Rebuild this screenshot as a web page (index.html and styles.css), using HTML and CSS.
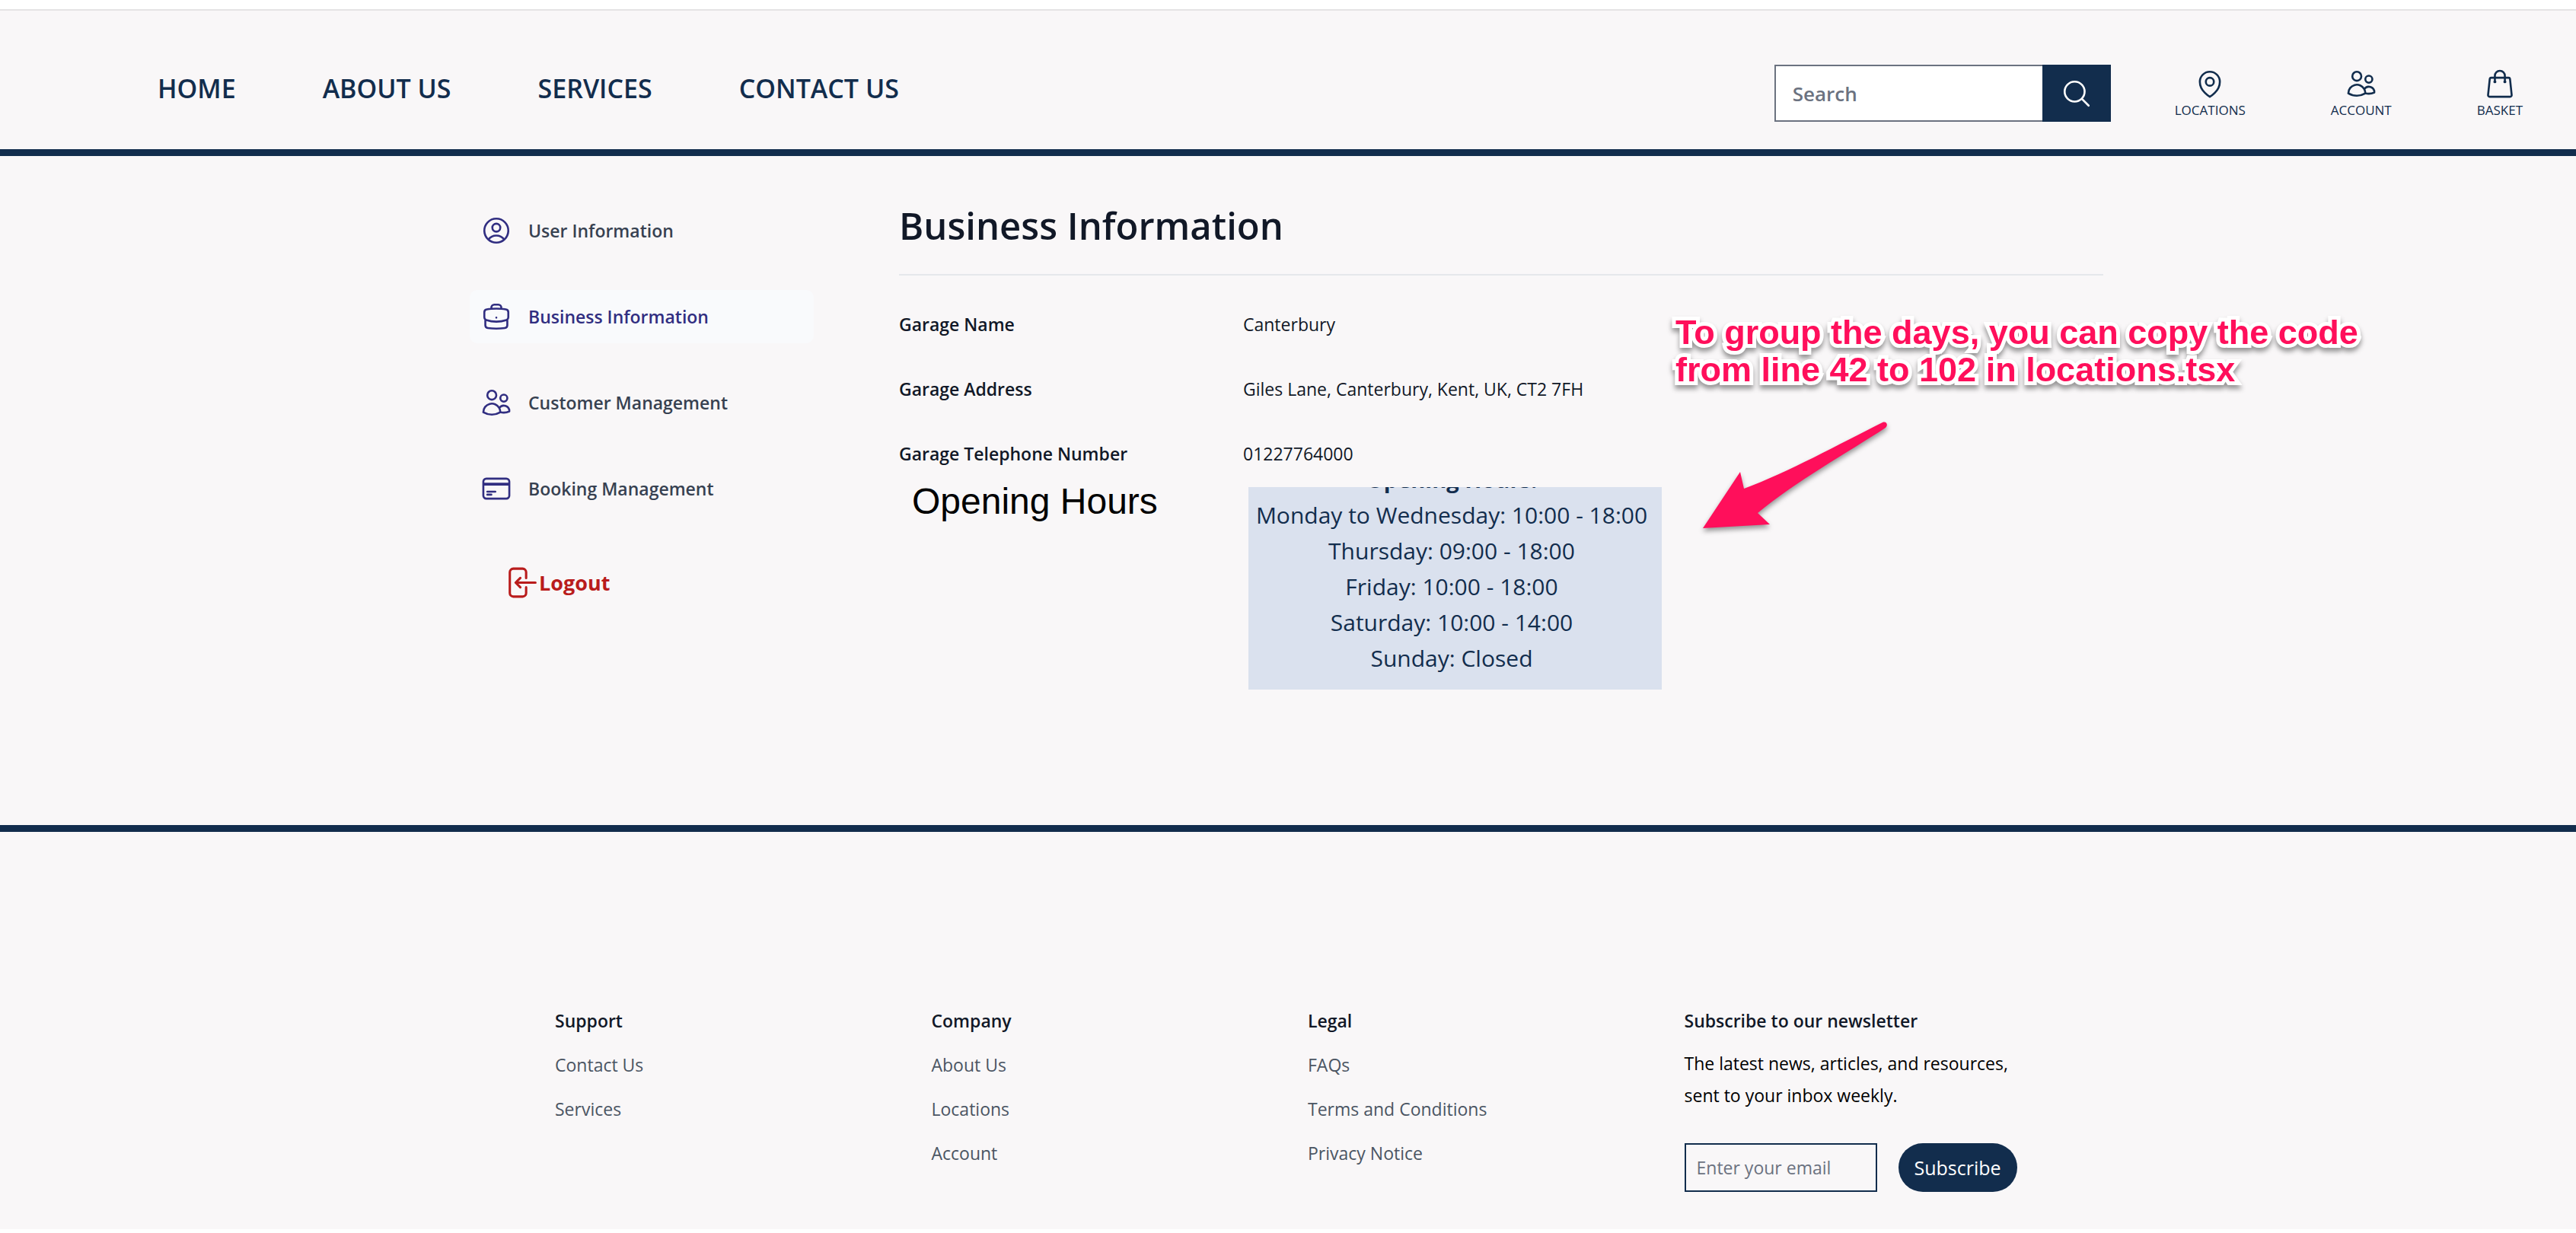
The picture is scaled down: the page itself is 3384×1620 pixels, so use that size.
FILE: index.html
```html
<!DOCTYPE html>
<html lang="en">
<head>
  <meta charset="utf-8">
  <meta name="viewport" content="width=device-width, initial-scale=1">
  <title>Business Information</title>
  <link rel="stylesheet" href="styles.css">
</head>
<body>
  <div class="page">
    <header class="header">
      <nav class="nav" aria-label="Main">
        <a href="#">HOME</a>
        <a href="#">ABOUT US</a>
        <a href="#">SERVICES</a>
        <a href="#">CONTACT US</a>
      </nav>
      <div class="header-tools">
        <form class="search">
          <input class="search-input" type="search" placeholder="Search" aria-label="Search">
          <button class="search-button" type="button" aria-label="Search">
            <svg class="icon" viewBox="0 0 24 24"><path d="M21 21l-5.197-5.197m0 0A7.5 7.5 0 105.196 5.196a7.5 7.5 0 0010.607 10.607z"/></svg>
          </button>
        </form>
        <div class="actions">
          <a class="action" href="#">
            <svg class="icon" viewBox="0 0 24 24"><path d="M15 10.5a3 3 0 11-6 0 3 3 0 016 0z"/><path d="M19.5 10.5c0 7.142-7.5 11.25-7.5 11.25S4.5 17.642 4.5 10.5a7.5 7.5 0 1115 0z"/></svg>
            <span>LOCATIONS</span>
          </a>
          <a class="action" href="#">
            <svg class="icon" viewBox="0 0 24 24"><path d="M15 19.128a9.38 9.38 0 002.625.372 9.337 9.337 0 004.121-.952 4.125 4.125 0 00-7.533-2.493M15 19.128v-.003c0-1.113-.285-2.16-.786-3.07M15 19.128v.106A12.318 12.318 0 018.624 21c-2.331 0-4.512-.645-6.374-1.766l-.001-.109a6.375 6.375 0 0111.964-3.07M12 6.375a3.375 3.375 0 11-6.75 0 3.375 3.375 0 016.75 0zm8.25 2.25a2.625 2.625 0 11-5.25 0 2.625 2.625 0 015.25 0z"/></svg>
            <span>ACCOUNT</span>
          </a>
          <a class="action" href="#">
            <svg class="icon" viewBox="0 0 24 24"><path d="M15.75 10.5V6a3.75 3.75 0 10-7.5 0v4.5m11.356-1.993l1.263 12c.07.665-.45 1.243-1.119 1.243H4.25a1.125 1.125 0 01-1.12-1.243l1.264-12A1.125 1.125 0 015.513 7.5h12.974c.576 0 1.059.435 1.119 1.007zM8.625 10.5a.375.375 0 11-.75 0 .375.375 0 01.75 0zm7.5 0a.375.375 0 11-.75 0 .375.375 0 01.75 0z"/></svg>
            <span>BASKET</span>
          </a>
        </div>
      </div>
    </header>

    <main class="main">
      <aside class="sidebar">
        <nav class="side-nav" aria-label="Account">
          <a class="side-link" href="#">
            <svg class="icon" viewBox="0 0 24 24"><path d="M17.982 18.725A7.488 7.488 0 0012 15.75a7.488 7.488 0 00-5.982 2.975m11.963 0a9 9 0 10-11.963 0m11.963 0A8.966 8.966 0 0112 21a8.966 8.966 0 01-5.982-2.275M15 9.75a3 3 0 11-6 0 3 3 0 016 0z"/></svg>
            User Information
          </a>
          <a class="side-link side-link-active" href="#" aria-current="page">
            <svg class="icon" viewBox="0 0 24 24"><path d="M20.25 14.15v4.25c0 1.094-.787 2.036-1.872 2.18-2.087.277-4.216.42-6.378.42s-4.291-.143-6.378-.42c-1.085-.144-1.872-1.086-1.872-2.18v-4.25m16.5 0a2.18 2.18 0 00.75-1.661V8.706c0-1.081-.768-2.015-1.837-2.175a48.114 48.114 0 00-3.413-.387m4.5 8.006c-.194.165-.42.295-.673.38A23.978 23.978 0 0112 15.75c-2.648 0-5.195-.429-7.577-1.22a2.016 2.016 0 01-.673-.38m0 0A2.18 2.18 0 013 12.489V8.706c0-1.081.768-2.015 1.837-2.175a48.111 48.111 0 013.413-.387m7.5 0V5.25A2.25 2.25 0 0013.5 3h-3a2.25 2.25 0 00-2.25 2.25v.894m7.5 0a48.667 48.667 0 00-7.5 0M12 12.75h.008v.008H12v-.008z"/></svg>
            Business Information
          </a>
          <a class="side-link" href="#">
            <svg class="icon" viewBox="0 0 24 24"><path d="M15 19.128a9.38 9.38 0 002.625.372 9.337 9.337 0 004.121-.952 4.125 4.125 0 00-7.533-2.493M15 19.128v-.003c0-1.113-.285-2.16-.786-3.07M15 19.128v.106A12.318 12.318 0 018.624 21c-2.331 0-4.512-.645-6.374-1.766l-.001-.109a6.375 6.375 0 0111.964-3.07M12 6.375a3.375 3.375 0 11-6.75 0 3.375 3.375 0 016.75 0zm8.25 2.25a2.625 2.625 0 11-5.25 0 2.625 2.625 0 015.25 0z"/></svg>
            Customer Management
          </a>
          <a class="side-link" href="#">
            <svg class="icon" viewBox="0 0 24 24"><path d="M2.25 8.25h19.5M2.25 9h19.5m-16.5 5.25h6m-6 2.25h3m-3.75 3h15a2.25 2.25 0 002.25-2.25V6.75A2.25 2.25 0 0019.5 4.5h-15a2.25 2.25 0 00-2.25 2.25v10.5A2.25 2.25 0 004.5 19.5z"/></svg>
            Booking Management
          </a>
        </nav>
        <button class="logout" type="button">
          <svg class="icon icon-large" viewBox="0 0 24 24"><path d="M15.75 9V5.25A2.25 2.25 0 0013.5 3h-6a2.25 2.25 0 00-2.25 2.25v13.5A2.25 2.25 0 007.5 21h6a2.25 2.25 0 002.25-2.25V15M12 9l-3 3m0 0l3 3m-3-3h12.75"/></svg>
          Logout
        </button>
      </aside>

      <section class="content">
        <h1 class="title">Business Information</h1>
        <dl class="details">
          <div class="detail">
            <dt>Garage Name</dt>
            <dd>Canterbury</dd>
          </div>
          <div class="detail">
            <dt>Garage Address</dt>
            <dd>Giles Lane, Canterbury, Kent, UK, CT2 7FH</dd>
          </div>
          <div class="detail">
            <dt>Garage Telephone Number</dt>
            <dd>01227764000</dd>
          </div>
        </dl>
        <div class="hours">
          <h2 class="hours-title">Opening Hours</h2>
          <div class="hours-card">
            <h3 class="hours-card-title">Opening Hours:</h3>
            <p>Monday to Wednesday: 10:00 - 18:00</p>
            <p>Thursday: 09:00 - 18:00</p>
            <p>Friday: 10:00 - 18:00</p>
            <p>Saturday: 10:00 - 14:00</p>
            <p>Sunday: Closed</p>
          </div>
        </div>
        <p class="note">To group the days, you can copy the code<br>from line 42 to 102 in locations.tsx</p>
        <svg class="note-arrow" viewBox="0 0 260 160" aria-hidden="true"><path d="M7 144L56 70L61 92C120 70 185 34 243 5C248 3 251 8 247 12C195 46 130 82 79 124L95 139Z"/></svg>
      </section>
    </main>

    <footer class="footer">
      <div class="footer-grid">
        <div class="footer-column">
          <h2 class="footer-title">Support</h2>
          <a href="#">Contact Us</a>
          <a href="#">Services</a>
        </div>
        <div class="footer-column">
          <h2 class="footer-title">Company</h2>
          <a href="#">About Us</a>
          <a href="#">Locations</a>
          <a href="#">Account</a>
        </div>
        <div class="footer-column">
          <h2 class="footer-title">Legal</h2>
          <a href="#">FAQs</a>
          <a href="#">Terms and Conditions</a>
          <a href="#">Privacy Notice</a>
        </div>
        <div class="newsletter">
          <h2 class="footer-title">Subscribe to our newsletter</h2>
          <p class="newsletter-text">The latest news, articles, and resources, sent to your inbox weekly.</p>
          <form class="newsletter-form">
            <input class="newsletter-input" type="email" placeholder="Enter your email" aria-label="Email address">
            <button class="newsletter-button" type="button">Subscribe</button>
          </form>
        </div>
      </div>
    </footer>
  </div>
</body>
</html>
```
FILE: styles.css
```css
:root {
  --navy: #122d4d;
  --indigo: #312e81;
  --ink: #111827;
  --slate: #374151;
  --gray: #4b5563;
  --placeholder: #6b7280;
  --surface: #f9f7f8;
}

* {
  box-sizing: border-box;
}

body {
  margin: 0;
  background: #fff;
  color: var(--ink);
  font-family: "Open Sans", "Noto Sans", sans-serif;
  font-size: 23px;
  line-height: 42px;
}

h1, h2, h3, p, dl, dd {
  margin: 0;
}

a {
  color: inherit;
  text-decoration: none;
}

input,
button {
  margin: 0;
  font: inherit;
}

button {
  cursor: pointer;
}

.icon {
  display: block;
  flex: none;
  width: 42px;
  height: 42px;
  fill: none;
  stroke: currentColor;
  stroke-width: 1.5;
  stroke-linecap: round;
  stroke-linejoin: round;
}

.icon-large {
  width: 49px;
  height: 49px;
}

.page {
  margin-top: 12px;
  border-top: 2px solid #e4e3e4;
  background: var(--surface);
}

/* Header */

.header {
  display: flex;
  justify-content: space-between;
  align-items: center;
  padding: 71px 70px 36px 207px;
  border-bottom: 9px solid var(--navy);
  color: var(--navy);
}

.nav {
  display: flex;
  gap: 114px;
  padding-bottom: 14px;
  font-size: 34px;
  font-weight: 600;
  line-height: 48px;
}

.header-tools {
  display: flex;
  align-items: center;
  gap: 84px;
}

.search {
  display: flex;
  height: 75px;
}

.search-input {
  width: 352px;
  padding: 0 22px;
  border: 2px solid var(--placeholder);
  border-right: 0;
  border-radius: 0;
  background: #fff;
  font-size: 26px;
  font-weight: 600;
  appearance: none;
}

.search-input::placeholder,
.newsletter-input::placeholder {
  color: var(--placeholder);
  opacity: 1;
}

.search-button {
  display: flex;
  align-items: center;
  justify-content: center;
  width: 90px;
  padding: 0;
  border: 0;
  background: var(--navy);
  color: #fff;
}

.actions {
  display: flex;
  gap: 112px;
}

.action {
  display: flex;
  flex-direction: column;
  align-items: center;
  gap: 2px;
  font-size: 17px;
  line-height: 24px;
}

/* Account area */

.main {
  display: grid;
  grid-template-columns: 452px minmax(0, 1fr);
  gap: 112px;
  max-width: 2240px;
  margin: 0 auto;
  padding: 59px 49px 178px 45px;
}

.sidebar {
  padding-top: 4px;
}

.side-nav {
  display: flex;
  flex-direction: column;
  gap: 43px;
}

.side-link {
  display: flex;
  align-items: center;
  gap: 21px;
  padding: 14px;
  border-radius: 10px;
  color: var(--slate);
  font-weight: 600;
}

.side-link .icon,
.side-link-active {
  color: var(--indigo);
}

.side-link-active {
  background: #f9fafc;
}

.logout {
  display: flex;
  align-items: center;
  margin: 64px 0 0 42px;
  padding: 0;
  border: 0;
  background: none;
  color: #b91c1c;
  font-size: 27px;
  font-weight: 700;
}

.content {
  position: relative;
}

.title {
  padding-bottom: 32px;
  border-bottom: 2px solid #e5e7eb;
  font-size: 49px;
  font-weight: 600;
  line-height: 64px;
}

.details {
  display: flex;
  flex-direction: column;
  gap: 43px;
  margin-top: 43px;
}

.detail,
.hours {
  display: grid;
  grid-template-columns: 452px minmax(0, 1fr);
}

.detail dt {
  font-weight: 600;
}

.hours {
  align-items: start;
  margin-top: 14px;
}

.hours-title {
  padding-left: 17px;
  color: #000;
  font-family: "Liberation Sans", Arial, sans-serif;
  font-size: 48px;
  font-weight: 400;
  line-height: 56px;
}

/* The card crops its own heading at the top edge */
.hours-card {
  justify-self: start;
  overflow: hidden;
  width: 543px;
  margin: 9px 0 0 7px;
  padding: 0 9px 18px 0;
  background: #dae1ee;
  color: var(--navy);
  font-size: 30px;
  line-height: 47px;
  text-align: center;
  white-space: nowrap;
}

.hours-card-title {
  margin-top: -34px;
  font-size: 29px;
  font-weight: 700;
}

/* Review note laid over the page */
.note {
  position: absolute;
  top: 148px;
  left: 1020px;
  color: #ff0f5b;
  font-family: "Liberation Sans", Arial, sans-serif;
  font-size: 45px;
  font-weight: 700;
  line-height: 49px;
  white-space: nowrap;
  -webkit-text-stroke: 10px #fff;
  paint-order: stroke fill;
  stroke-linejoin: round;
  filter: drop-shadow(0 5px 3px rgba(0, 0, 0, 0.4));
}

.note-arrow {
  position: absolute;
  top: 286px;
  left: 1049px;
  width: 260px;
  height: 160px;
  fill: #ff0f5b;
  filter: drop-shadow(0 4px 3px rgba(0, 0, 0, 0.4));
}

/* Footer */

.footer {
  padding: 227px 34px 49px 32px;
  border-top: 9px solid var(--navy);
}

.footer-grid {
  display: grid;
  grid-template-columns: repeat(4, minmax(0, 1fr));
  gap: 54px;
  max-width: 1924px;
  margin: 0 auto;
}

.footer-column {
  display: flex;
  flex-direction: column;
  align-items: flex-start;
  gap: 16px;
  color: var(--gray);
}

.footer-title {
  color: var(--ink);
  font-size: 23px;
  font-weight: 600;
}

.newsletter-text {
  margin-top: 14px;
  color: #000;
}

.newsletter-form {
  display: flex;
  gap: 28px;
  margin-top: 42px;
}

.newsletter-input {
  width: 253px;
  height: 64px;
  padding: 0 14px;
  border: 2px solid var(--navy);
  border-radius: 0;
  background: transparent;
}

.newsletter-button {
  height: 64px;
  padding: 0 21px;
  border: 0;
  border-radius: 32px;
  background: var(--navy);
  color: #fff;
  font-size: 25px;
}
```
